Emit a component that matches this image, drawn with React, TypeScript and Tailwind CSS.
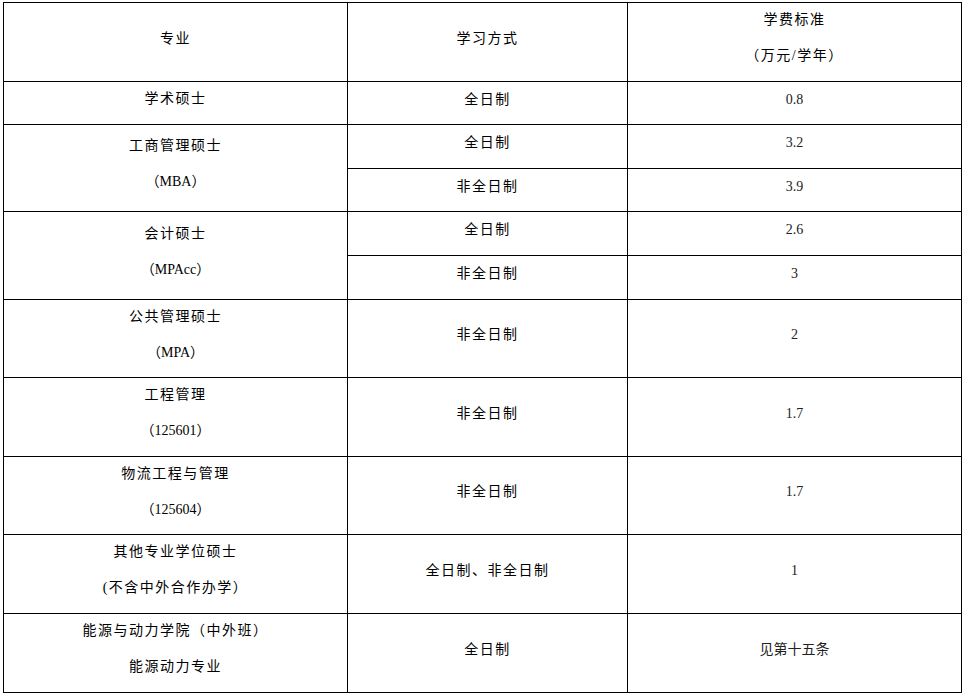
import React from 'react';

// 学费一览表
type Row = {
  major: string[];
  modes: { mode: string; fee: string }[];
  h: string[];
};

const rows: Row[] = [
  { major: ['学术硕士'], modes: [{ mode: '全日制', fee: '0.8' }], h: ['h-[43px]'] },
  {
    major: ['工商管理硕士', '（MBA）'],
    modes: [
      { mode: '全日制', fee: '3.2' },
      { mode: '非全日制', fee: '3.9' },
    ],
    h: ['h-[44px]', 'h-[43px]'],
  },
  {
    major: ['会计硕士', '（MPAcc）'],
    modes: [
      { mode: '全日制', fee: '2.6' },
      { mode: '非全日制', fee: '3' },
    ],
    h: ['h-[44px]', 'h-[44px]'],
  },
  { major: ['公共管理硕士', '（MPA）'], modes: [{ mode: '非全日制', fee: '2' }], h: ['h-[78px]'] },
  { major: ['工程管理', '（125601）'], modes: [{ mode: '非全日制', fee: '1.7' }], h: ['h-[79px]'] },
  { major: ['物流工程与管理', '（125604）'], modes: [{ mode: '非全日制', fee: '1.7' }], h: ['h-[78px]'] },
  {
    major: ['其他专业学位硕士', '(不含中外合作办学）'],
    modes: [{ mode: '全日制、非全日制', fee: '1' }],
    h: ['h-[79px]'],
  },
  {
    major: ['能源与动力学院（中外班）', '能源动力专业'],
    modes: [{ mode: '全日制', fee: '见第十五条' }],
    h: ['h-[79px]'],
  },
];

const cell = 'border border-black p-0 pb-[8px] text-center align-middle';

function Lines({ items }: { items: string[] }) {
  return (
    <div className="flex flex-col items-center gap-[16px]">
      {items.map((t, i) => (
        <div key={i} className={`leading-[20px] ${/[A-Za-z0-9]/.test(t) ? 'tracking-normal' : ''}`}>
          {t}
        </div>
      ))}
    </div>
  );
}

export default function App() {
  return (
    <div className="w-[965px] h-[695px] bg-white pt-[2px] pl-[3px] overflow-hidden">
      <table
        className="table-fixed border-collapse text-[14px] tracking-[1.5px] text-black"
        style={{ fontFamily: "'Liberation Serif', 'Noto Sans CJK SC', serif" }}
      >
        <colgroup>
          <col className="w-[344px]" />
          <col className="w-[280px]" />
          <col className="w-[334px]" />
        </colgroup>
        <tbody>
          <tr className="h-[79px]">
            <td className={cell}>专业</td>
            <td className={cell}>学习方式</td>
            <td className={cell}>
              <Lines items={['学费标准', '（万元/学年）']} />
            </td>
          </tr>
          {rows.map((r, ri) =>
            r.modes.map((m, mi) => (
              <tr key={`${ri}-${mi}`} className={r.h[mi]}>
                {mi === 0 && (
                  <td className={cell} rowSpan={r.modes.length}>
                    <Lines items={r.major} />
                  </td>
                )}
                <td className={cell}>{m.mode}</td>
                <td className={`${cell} tracking-normal text-[#222]`}>{m.fee}</td>
              </tr>
            ))
          )}
        </tbody>
      </table>
    </div>
  );
}
